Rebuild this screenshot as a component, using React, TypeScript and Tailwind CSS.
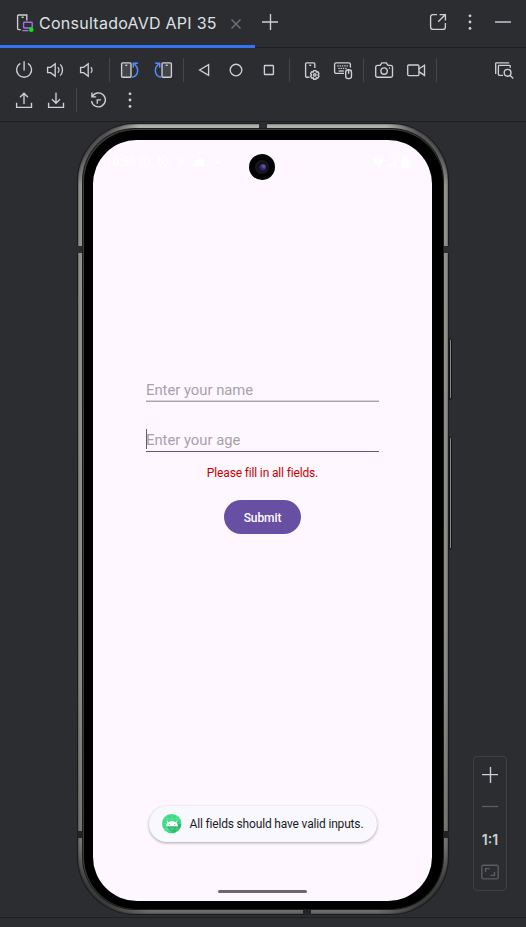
import type { ReactNode } from "react";

function Icon({ children, size = 24, className = "" }: { children: ReactNode; size?: number; className?: string }) {
  return (
    <svg
      width={size}
      height={size}
      viewBox={`0 0 ${size} ${size}`}
      fill="none"
      stroke="currentColor"
      strokeWidth="1.35"
      className={`shrink-0 ${className}`}
    >
      {children}
    </svg>
  );
}

function Slot({ children }: { children: ReactNode }) {
  return (
    <button className="flex h-[30px] w-8 shrink-0 items-center justify-center text-[#ced0d6]">
      <Icon>{children}</Icon>
    </button>
  );
}

function Separator({ narrow = false }: { narrow?: boolean }) {
  return (
    <div className={`flex h-[30px] w-[10px] shrink-0 items-center ${narrow ? "pl-1" : "pl-[5px]"}`}>
      <div className="h-6 w-px bg-[#43454a]" />
    </div>
  );
}

function Dots() {
  return (
    <g fill="currentColor" stroke="none">
      <circle cx="12" cy="5.8" r="1.4" />
      <circle cx="12" cy="12" r="1.4" />
      <circle cx="12" cy="18.4" r="1.4" />
    </g>
  );
}

function RotatePhone() {
  return (
    <>
      <rect x="3.6" y="4.8" width="9.4" height="14.4" rx="1" fill="#43454a" />
      <path d="M7.3 7.3h2" />
      <g stroke="#548af7" strokeWidth="1.5">
        <path d="M13.8 19.2C20.5 18 22 10 15.4 5.3" />
        <path d="M15.3 9.8V5.2h4.6" />
      </g>
    </>
  );
}

function Header() {
  return (
    <header className="flex h-12 shrink-0 items-start border-b border-[#1e1f22] text-[#ced0d6]">
      <div className="flex h-12 w-[255px] shrink-0 items-center border-b-[3px] border-[#3574f0] pl-4 pt-px">
        <Icon size={18}>
          <path d="M4.8 15.6H2.6a1 1 0 0 1-1-1V2a1 1 0 0 1 1-1h8.2v5.5" />
          <path d="M5.5 3.3h2.2" />
          <g stroke="#a571e6">
            <rect x="7.6" y="8.2" width="8.6" height="5.8" rx="0.8" />
            <path d="M6.3 16.6h6.2" />
          </g>
          <circle cx="15.3" cy="15.7" r="2.3" fill="#00f000" stroke="none" />
        </Icon>
        <span className="ml-[5px] w-[179px] whitespace-nowrap font-['Inter',sans-serif] text-[16px] leading-6 tracking-[0.26px] text-[#dfe1e5]">
          ConsultadoAVD API 35
        </span>
        <Icon size={16} className="ml-[10px] mt-px text-[#6f737a]">
          <path d="M3.5 3.5l9 9M12.5 3.5l-9 9" />
        </Icon>
      </div>
      <div className="flex h-[43px] flex-1 items-center pl-[7px]">
        <Icon size={16}>
          <path d="M8.5 0v16M0 8h16" />
        </Icon>
        <Icon className="ml-[148px]">
          <path d="M11 4.6H7a2.4 2.4 0 0 0-2.4 2.4v10A2.4 2.4 0 0 0 7 19.4h10a2.4 2.4 0 0 0 2.4-2.4v-4" />
          <path d="M13.6 4.6h5.8v5.8M19.4 4.6l-7.2 7.2" />
        </Icon>
        <Icon className="ml-2">
          <Dots />
        </Icon>
        <Icon size={16} className="ml-[13px] text-[#9da0a6]">
          <path d="M0 8h16" strokeWidth="2" />
        </Icon>
      </div>
    </header>
  );
}

function Toolbar() {
  return (
    <div className="h-[74px] shrink-0 border-b border-[#1e1f22] pl-2 pt-[7px]">
      <div className="flex">
        <Slot>
          <path d="M8.3 5.3a7.5 7.5 0 1 0 7.6 0M12.1 3.3v9.2" />
        </Slot>
        <Slot>
          <path d="M3.6 9.4h3l4.6-3.6v12.4l-4.6-3.6h-3z" />
          <path d="M13.8 9.2a4 4 0 0 1 0 5.6M16.3 6.4a8.2 8.2 0 0 1 0 11.2" />
        </Slot>
        <Slot>
          <path d="M4.6 9.4h3l4.6-3.6v12.4l-4.6-3.6h-3z" />
          <path d="M14.8 9.2a4 4 0 0 1 0 5.6" />
        </Slot>
        <Separator />
        <Slot>
          <RotatePhone />
        </Slot>
        <Slot>
          <g transform="translate(25 0) scale(-1 1)">
            <RotatePhone />
          </g>
        </Slot>
        <Separator />
        <Slot>
          <path d="M7.6 12l9-5.3v10.6z" />
        </Slot>
        <Slot>
          <circle cx="12" cy="12" r="5.8" />
        </Slot>
        <Slot>
          <rect x="8.4" y="7.5" width="9" height="9" rx="0.6" />
        </Slot>
        <Separator />
        <Slot>
          <path d="M11.5 19.2H8.6a1 1 0 0 1-1-1V5.8a1 1 0 0 1 1-1h7.2a1 1 0 0 1 1 1V10" />
          <path d="M11.2 7.3h2" />
          <path d="M15.7 12.6h2.2l.5 1.4 1.5-.2 1.1 1.9-1 1.2 1 1.2-1.1 1.9-1.5-.2-.5 1.4h-2.2l-.5-1.4-1.5.2-1.1-1.9 1-1.2-1-1.2 1.1-1.9 1.5.2z" />
          <circle cx="16.8" cy="16.9" r="1.2" />
        </Slot>
        <Slot>
          <path d="M14 15.4H6.2a1.6 1.6 0 0 1-1.6-1.6V6.4a1.6 1.6 0 0 1 1.6-1.6h12.6a1.6 1.6 0 0 1 1.6 1.6V9.5" />
          <path d="M7.3 7.8h10.8M8.3 10.3h8.6" strokeDasharray="1.3 1" />
          <path d="M8.6 13h5.2" />
          <rect x="15.7" y="11.7" width="5.8" height="8.9" rx="2.6" />
          <path d="M18.6 12v3.8" />
        </Slot>
        <Separator />
        <Slot>
          <path d="M5.5 7.4h2.7l1.7-2.6h4.4L16 7.4h2.7a1.8 1.8 0 0 1 1.8 1.8v8.2a1.8 1.8 0 0 1-1.8 1.8H5.5a1.8 1.8 0 0 1-1.8-1.8V9.2a1.8 1.8 0 0 1 1.8-1.8z" />
          <circle cx="12.1" cy="13" r="3.2" />
          <path d="M17 10h1" />
        </Slot>
        <Slot>
          <rect x="3.7" y="7" width="11.2" height="10.6" rx="1" />
          <path d="M14.9 11l5.6-3.8v10.2l-5.6-3.8" />
        </Slot>
        <Separator narrow />
        <div className="ml-[46px] flex">
          <Slot>
            <path d="M3.7 16V5.6a.8.8 0 0 1 .8-.8h12.7" />
            <path d="M11 17.3H7.2a.8.8 0 0 1-.8-.8V8.2a.8.8 0 0 1 .8-.8h10.3a.8.8 0 0 1 .8.8v1.6" />
            <circle cx="15.6" cy="14.8" r="3.4" />
            <path d="M18 17.3l3.2 3.2" />
          </Slot>
        </div>
      </div>
      <div className="flex">
        <Slot>
          <path d="M4.6 14.8v4.6h14.9v-4.6M12 16V5.2M8 9.2l4-4 4 4" />
        </Slot>
        <Slot>
          <path d="M4.6 14.8v4.6h14.9v-4.6M12 4.5v10.8M8 11.3l4 4 4-4" />
        </Slot>
        <Separator narrow />
        <Slot>
          <path d="M5.9 4.6v4.3h4.3M6.2 8.6a7 7 0 1 1-.7 4.6" />
          <path d="M11.3 15.8v-4H15" />
        </Slot>
        <Slot>
          <Dots />
        </Slot>
      </div>
    </div>
  );
}

function StatusBar() {
  return (
    <>
      <div className="absolute left-[13px] top-[14px] flex h-4 items-center text-white">
        <span className="w-[31px] text-[12px] font-medium leading-4 tracking-[-0.2px]">10:59</span>
        <svg width="84" height="14" viewBox="0 0 84 14" fill="none" stroke="white" strokeWidth="1.2">
          <circle cx="8" cy="7" r="4.8" />
          <path d="M9 4L7 7h2.2L7.5 10M26 2.2l4.3 1.6v3c0 2.5-1.8 4.5-4.3 5.4-2.5-.9-4.3-2.9-4.3-5.4v-3zM21.5 2.5l8.5 9" />
          <path d="M44.5 2.5v9M42.5 5l4 4M46.5 5l-4 4" />
          <path d="M58 6l4-4h5v10h-9z" fill="white" stroke="none" />
          <circle cx="80.5" cy="7" r="1.6" fill="white" stroke="none" />
        </svg>
      </div>
      <svg width="38" height="13" viewBox="0 0 38 13" fill="white" className="absolute left-[280px] top-4">
        <path d="M0 3Q5.8-1.5 11.7 3L5.8 11.5z" />
        <path d="M14 11l9.5-9.5V11z" opacity=".8" />
        <rect x="28.5" y="1" width="7" height="11" rx="2.5" />
      </svg>
    </>
  );
}

function AndroidLogo() {
  return (
    <svg width="20" height="20" viewBox="0 0 20 20" className="shrink-0">
      <circle cx="9.7" cy="9.7" r="9.7" fill="#3ddc84" />
      <path d="M4 12l6.5 7a9.7 9.7 0 0 0 8.8-8.5L16 8z" fill="#32b56d" />
      <path d="M5 1.5v16M10 .5v18M15 1.5v16M1.5 5h17M.5 9.5h19M1.5 15h17" stroke="#7ce9ad" strokeWidth=".4" />
      <path d="M4 12.3a6 5.2 0 0 1 12 0z" fill="white" />
      <path d="M6.3 9L5 6.900M13.7 9L15 6.900" stroke="white" strokeWidth=".8" />
      <circle cx="7.4" cy="10.3" r=".65" fill="#3ddc84" />
      <circle cx="12.6" cy="10.3" r=".65" fill="#3ddc84" />
    </svg>
  );
}

function Screen() {
  return (
    <div className="relative flex h-[761px] w-[339px] flex-col items-center overflow-hidden rounded-[44px] bg-[#fef7ff] font-['Roboto',sans-serif]">
      <StatusBar />
      <div className="mr-px mt-[14px] flex size-[26px] shrink-0 items-center justify-center rounded-full bg-[#030303]">
        <div className="flex size-[14px] items-center justify-center rounded-full border-2 border-[#18181a] bg-[#101016]">
          <div className="size-[7px] rounded-full bg-[radial-gradient(circle_at_70%_30%,#8a5f96,#28297d_45%,#111122)]" />
        </div>
      </div>
      <div className="mt-[199px] h-[23px] w-[233px] shrink-0 border-b border-[#aaa5ad] text-[14.8px] leading-[22px] text-[#a7a2aa] shadow-[inset_0_-1px_0_#d6d0d8]">
        Enter your name
      </div>
      <div className="relative mt-[27px] h-[23px] w-[233px] shrink-0 border-b border-[#625b71] text-[14.8px] leading-[22px] text-[#a7a2aa]">
        Enter your age
        <div className="absolute left-0 top-0 h-5 w-px bg-[#625b71]" />
      </div>
      <p className="mt-[13px] h-4 shrink-0 whitespace-nowrap text-[12px] leading-4 tracking-[-0.15px] text-[#cc0000]">
        Please fill in all fields.
      </p>
      <button className="mt-[19px] h-[34px] w-[77px] shrink-0 rounded-full bg-[#6750a4] pt-px text-[12px] font-medium tracking-[-0.1px] text-white">
        Submit
      </button>
      <div className="mt-[272px] flex h-9 w-[228px] shrink-0 items-center rounded-full bg-[#faf8ff] pl-[13px] shadow-[0_1px_3px_rgba(0,0,0,0.35)]">
        <AndroidLogo />
        <span className="ml-2 whitespace-nowrap text-[12px] leading-4 tracking-[-0.17px] text-[#1a1b21]">
          All fields should have valid inputs.
        </span>
      </div>
      <div className="mt-12 h-[3px] w-[89px] shrink-0 rounded-full bg-[#6b686c]" />
    </div>
  );
}

function Phone() {
  return (
    <div className="relative h-[792px] w-[372px] rounded-[58px] bg-[#1a1b1c] p-px">
      <div className="absolute left-[372px] top-[215px] h-[62px] w-[3px] rounded-r-sm border border-[#161617] bg-[#858581]" />
      <div className="absolute left-[372px] top-[313px] h-[114px] w-[3px] rounded-r-sm border border-[#161617] bg-[#858581]" />
      <div className="h-full rounded-[57px] bg-[radial-gradient(circle_at_0_0,#555_30px,transparent_62px),radial-gradient(circle_at_100%_0,#555_30px,transparent_62px),radial-gradient(circle_at_0_100%,#3c3c3c_30px,transparent_70px),radial-gradient(circle_at_100%_100%,#3c3c3c_30px,transparent_70px),linear-gradient(180deg,#b2b2af_0px,#92928e_40px,#8b8b87_550px,#72726f_720px,#6a6a68_790px)] p-1 shadow-[inset_0_0_2px_rgba(0,0,0,0.75)]">
        <div className="h-full rounded-[53px] bg-[#1c1c1c] p-px">
          <div className="h-full rounded-[52px] bg-[#3c3d3b] p-[0.5px]">
            <div className="h-full rounded-[52px] bg-black pl-[9.5px] pt-[10.5px]">
              <Screen />
            </div>
          </div>
        </div>
      </div>
      <div className="absolute left-0 top-[123px] h-[7px] w-[5px] bg-[#2b2c2d]" />
      <div className="absolute right-0 top-[123px] h-[7px] w-[5px] bg-[#2b2c2d]" />
      <div className="absolute left-0 top-[708px] h-[7px] w-[5px] bg-[#222324]" />
      <div className="absolute right-0 top-[708px] h-[7px] w-[5px] bg-[#222324]" />
      <div className="absolute left-[182px] top-0 h-[5px] w-[8px] bg-[#2b2c2d]" />
      <div className="absolute bottom-0 left-[226px] h-[5px] w-[8px] bg-[#222324]" />
    </div>
  );
}

function ZoomControls() {
  return (
    <div className="mb-[26px] mr-[19px] flex h-[135px] w-[34px] flex-col items-center rounded-[4px] border border-[#3d3f43] text-[#ced0d6]">
      <Icon size={16} className="mr-px mt-[10px]">
        <path d="M8.5 0v16M0 7.6h16" />
      </Icon>
      <Icon size={16} className="mr-px mt-4 text-[#5a5d63]">
        <path d="M0 7.5h16" />
      </Icon>
      <span className="mt-4 font-['Inter',sans-serif] text-[14px] font-semibold leading-[18px]">1:1</span>
      <Icon size={18} className="mt-[14px] text-[#5a5d63]">
        <rect x=".8" y="2.2" width="16.4" height="13.6" rx="1.6" />
        <path d="M4.5 9V5.6h4M13.5 9v3.4h-4" />
      </Icon>
    </div>
  );
}

export default function App() {
  return (
    <div className="flex h-[927px] w-[526px] flex-col overflow-hidden bg-[#2b2d30]">
      <Header />
      <Toolbar />
      <main className="flex h-[795px] shrink-0 items-end justify-between pl-[77px]">
        <div className="h-full pt-px">
          <Phone />
        </div>
        <ZoomControls />
      </main>
      <footer className="h-[10px] shrink-0 border-t border-[#1e1f22]" />
    </div>
  );
}
